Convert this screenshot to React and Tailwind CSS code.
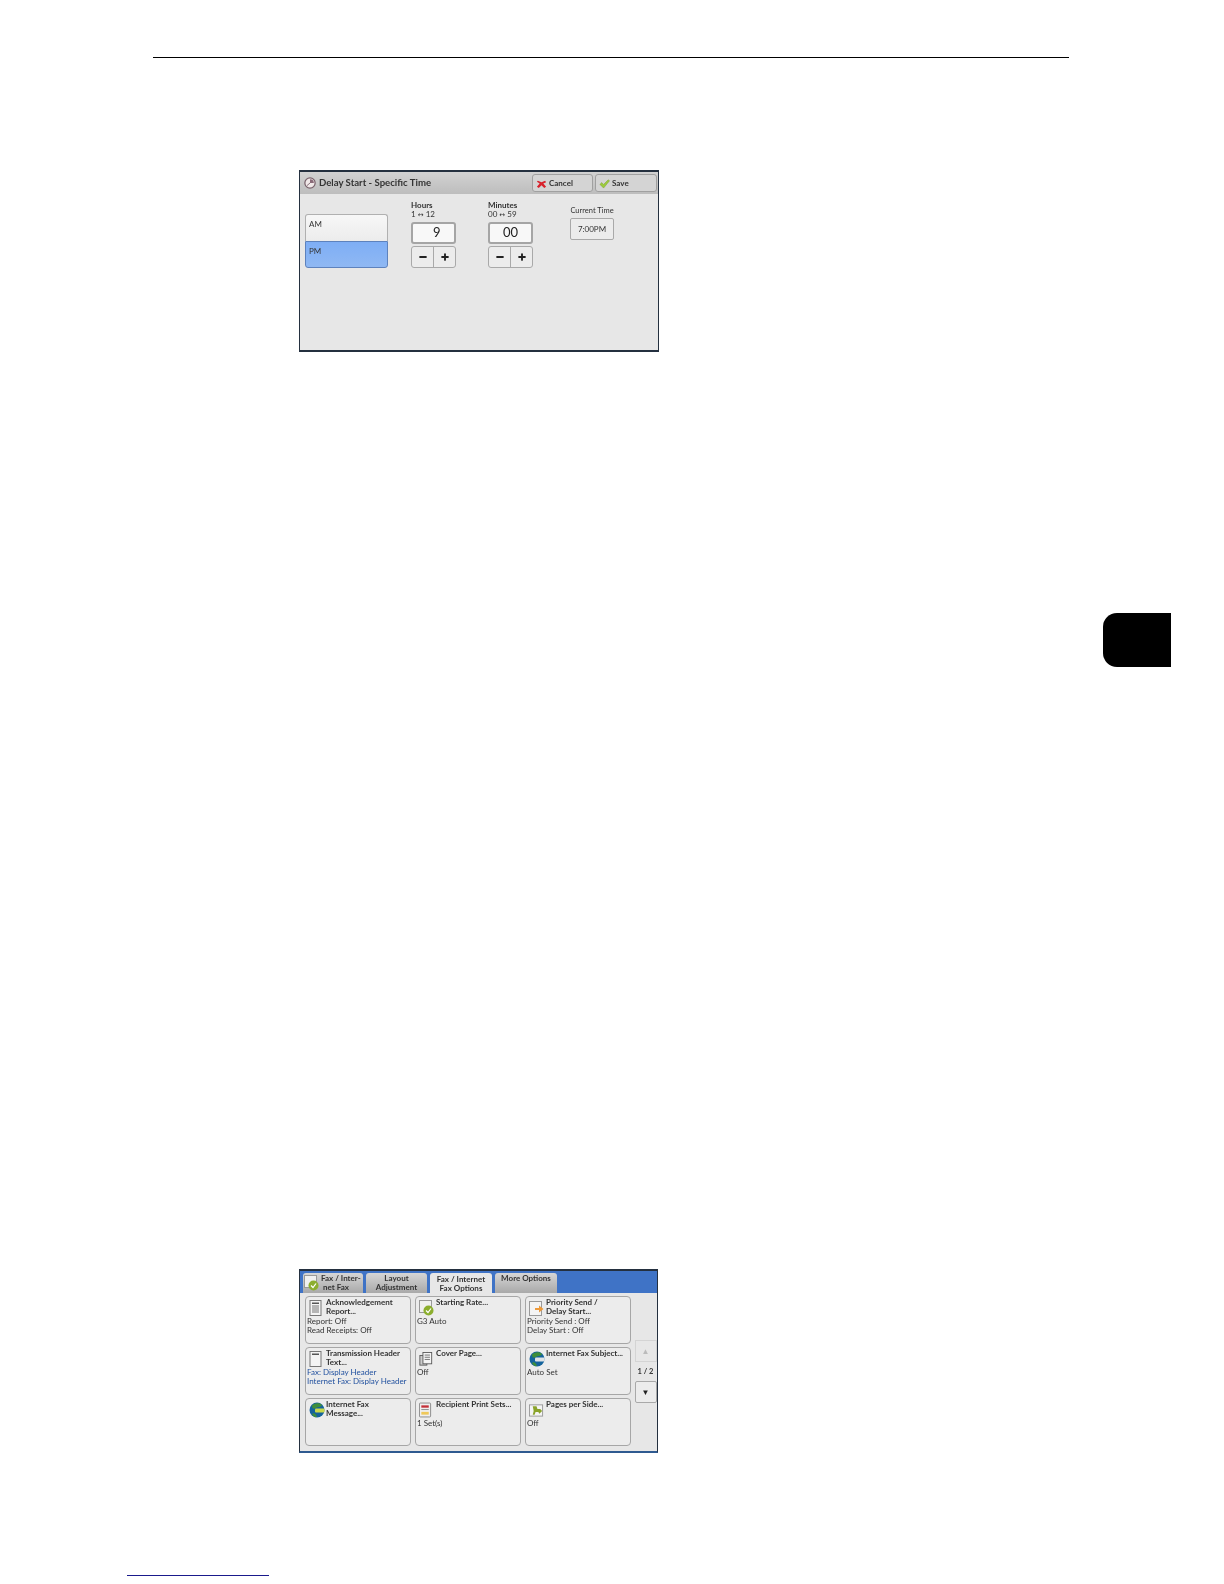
import { Minus, Plus } from 'lucide-react';

const UI_FONT = "font-['Lato',sans-serif]";

const CARDS = [
  { icon: 'report', title: ['Acknowledgement', 'Report...'], lines: ['Report: Off', 'Read Receipts: Off'] },
  { icon: 'rate', title: ['Starting Rate...'], lines: ['G3 Auto'] },
  { icon: 'priority', title: ['Priority Send /', 'Delay Start...'], lines: ['Priority Send : Off', 'Delay Start : Off'] },
  { icon: 'header', title: ['Transmission Header', 'Text...'], lines: ['Fax: Display Header', 'Internet Fax: Display Header'], blue: true },
  { icon: 'cover', title: ['Cover Page...'], lines: ['Off'] },
  { icon: 'globe', title: ['Internet Fax Subject...'], lines: ['Auto Set'] },
  { icon: 'globe2', title: ['Internet Fax', 'Message...'], lines: [] },
  { icon: 'sets', title: ['Recipient Print Sets...'], lines: ['1 Set(s)'] },
  { icon: 'pages', title: ['Pages per Side...'], lines: ['Off'] },
];

function CardIcon({ name }) {
  if (name === 'report' || name === 'header') {
    return (
      <svg viewBox="0 0 14 16" className="h-[16px] w-[14px]">
        <rect x="1" y="0.5" width="11" height="15" fill="#f4f4f4" stroke="#777" />
        <rect x="3" y="2.5" width="7" height="1.5" fill="#555" />
        {name === 'report' && <path d="M3 6h7M3 8h7M3 10h7M3 12h7" stroke="#777" />}
      </svg>
    );
  }
  if (name === 'rate') {
    return (
      <svg viewBox="0 0 16 16" className="h-[16px] w-[16px]">
        <rect x="0.5" y="0.5" width="12" height="12" fill="#f0f0f0" stroke="#999" />
        <circle cx="9.5" cy="10.5" r="5" fill="#8cae2e" />
        <path d="M7 10.5l2 2 3-4" stroke="#fff" strokeWidth="1.2" fill="none" />
      </svg>
    );
  }
  if (name === 'priority') {
    return (
      <svg viewBox="0 0 16 16" className="h-[16px] w-[16px]">
        <rect x="0.5" y="1.5" width="12" height="14" fill="#f4f4f4" stroke="#999" />
        <path d="M6 8h4V5.5L14.5 9 10 12.5V10H6z" fill="#ee9a3a" />
      </svg>
    );
  }
  if (name === 'cover') {
    return (
      <svg viewBox="0 0 16 16" className="h-[16px] w-[14px]">
        <rect x="1" y="4" width="8" height="11" fill="#ccc" stroke="#555" />
        <rect x="4.5" y="0.5" width="10" height="13" fill="#f4f4f4" stroke="#555" />
        <path d="M6.5 3.5h6M6.5 6h6M6.5 8.500h6" stroke="#666" />
      </svg>
    );
  }
  if (name === 'globe' || name === 'globe2') {
    return (
      <svg viewBox="0 0 16 16" className="h-[16px] w-[16px]">
        <circle cx="8" cy="8" r="7.500" fill="#14639c" />
        <path d="M3 3.500C6 .5 11 .5 13 3c-1 2.500-4 1.500-6 3S3 7 3 3.500z" fill="#3e8e3a" />
        <rect x="6" y="6.500" width="9.500" height="4" rx="1" fill={name === 'globe' ? '#dfe3e6' : '#c9d84a'} />
        <path d="M3 12c2-2 4 0 5 3-2 .5-4-.5-5-3z" fill="#3e8e3a" />
      </svg>
    );
  }
  if (name === 'sets') {
    return (
      <svg viewBox="0 0 14 16" className="h-[16px] w-[13px]">
        <rect x="0.5" y="0.5" width="12" height="15" rx="1" fill="#efefef" stroke="#888" />
        <rect x="2.500" y="3" width="8" height="2.500" fill="#c4313a" />
        <path d="M2.500 7.500h8" stroke="#888" />
        <rect x="2.500" y="10" width="8" height="3" fill="#efc85a" />
      </svg>
    );
  }
  return (
    <svg viewBox="0 0 16 16" className="h-[16px] w-[15px]">
      <rect x="0.5" y="2.500" width="14" height="12" fill="#f4f4f4" stroke="#999" />
      <path d="M4 4h4l1 3h3l2 2-3 3-1-2H7L6 13H4l1-4z" fill="#8aa32a" />
    </svg>
  );
}

function Stepper() {
  return (
    <div className="mt-[2px] flex h-[22px] w-[45px] rounded-[3px] border border-[#a9a9a9] bg-[#ececec]">
      <div className="flex flex-1 items-center justify-center border-r border-[#a9a9a9]">
        <Minus size={10} strokeWidth={4.500} color="#222" />
      </div>
      <div className="flex flex-1 items-center justify-center">
        <Plus size={10} strokeWidth={4.500} color="#222" />
      </div>
    </div>
  );
}

function TimeField({ label, range, value, valueClass }) {
  return (
    <div className="flex w-[45px] flex-col">
      <div className="whitespace-nowrap text-[8px] leading-[9px] font-bold text-[#333]">{label}</div>
      <div className="whitespace-nowrap text-[8px] leading-[9px] text-[#333]">
        {range[0]} <span className="font-['DejaVu_Sans',sans-serif] text-[7px]">↔</span> {range[1]}
      </div>
      <div className="mt-[2px] flex h-[22px] items-center rounded-[3px] border-2 border-[#a5a5a5] bg-[#f8f8f8] text-[13px] text-[#222]">
        <span className={valueClass}>{value}</span>
      </div>
      <Stepper />
    </div>
  );
}

function DelayPanel() {
  return (
    <div className={`ml-[299px] flex h-[182px] w-[360px] flex-col border border-t-2 border-b-2 border-[#24303f] bg-[#e7e7e7] blur-[0.3px] ${UI_FONT}`}>
      <div className="flex h-[22px] items-center bg-gradient-to-b from-[#d2d2d2] to-[#bdbdbd] pr-[1px] pl-[4px]">
        <svg viewBox="0 0 14 14" className="h-[12px] w-[12px]">
          <circle cx="7" cy="7" r="6" fill="#f0e8e8" stroke="#77606a" strokeWidth="1.4" />
          <path d="M7 7V2.500A4.500 4.500 0 0 1 11.500 7z" fill="#8a6a78" />
          <path d="M7 7L3.500 10" stroke="#77606a" />
        </svg>
        <span className="ml-[3px] text-[9.600px] font-bold text-[#333]">Delay Start - Specific Time</span>
        <div className="ml-auto flex h-[18px] w-[61px] items-center rounded-[3px] border border-[#a0a0a0] bg-[#d4d4d4] pl-[3px]">
          <svg viewBox="0 0 12 12" className="h-[11px] w-[11px]">
            <path d="M2 3l4 1.500L10 3l1 1.500L8 6l3 3.500-2 1.500-3-3-3 3-2-1.500L4 6 1 4z" fill="#d8222c" />
          </svg>
          <span className="ml-[2px] text-[8px] font-bold text-[#333]">Cancel</span>
        </div>
        <div className="ml-[2px] flex h-[18px] w-[62px] items-center rounded-[3px] border border-[#a0a0a0] bg-[#d4d4d4] pl-[3px]">
          <svg viewBox="0 0 12 12" className="h-[11px] w-[11px]">
            <path d="M1 7l2-2 2 2 5-5 1.500 1L5 11z" fill="#9ccb3c" stroke="#7a9a30" strokeWidth="0.5" />
          </svg>
          <span className="ml-[2px] text-[8px] font-bold text-[#333]">Save</span>
        </div>
      </div>
      <div className="flex flex-1 items-start pt-[7px] pl-[5px]">
        <div className="mt-[13px] flex w-[83px] flex-col rounded-[3px] text-[8px] text-[#333]">
          <div className="h-[27px] rounded-t-[3px] border border-b-0 border-[#b0b0b0] bg-gradient-to-b from-[#f7f7f7] to-[#ececec] pt-[3px] pl-[3px]">AM</div>
          <div className="h-[27px] rounded-b-[3px] border border-[#5d82bd] bg-gradient-to-b from-[#7eaef5] to-[#8fb8f3] pt-[3px] pl-[3px]">PM</div>
        </div>
        <div className="ml-[23px]">
          <TimeField label="Hours" range={['1', '12']} value="9" valueClass="ml-[20px]" />
        </div>
        <div className="ml-[32px]">
          <TimeField label="Minutes" range={['00', '59']} value="00" valueClass="mx-auto" />
        </div>
        <div className="ml-[37px] flex w-[44px] flex-col items-center pt-[5px]">
          <div className="whitespace-nowrap text-[7.500px] leading-[9px] text-[#333]">Current Time</div>
          <div className="mt-[3px] flex h-[22px] w-[44px] items-center justify-center rounded-[2px] border border-[#a9a9a9] bg-[#ececec] text-[8px] text-[#333]">7:00PM</div>
        </div>
      </div>
    </div>
  );
}

function Tab({ lines, active, icon, className }) {
  return (
    <div className={`flex flex-col justify-center rounded-t-[3px] text-center text-[8px] leading-[9.500px] font-bold whitespace-nowrap text-[#333] ${active ? 'h-[22px] bg-[#e7e7e7]' : 'h-[20px] bg-gradient-to-b from-[#d6d6d6] to-[#a9a9a9]'} ${className}`}>
      {icon ? (
        <div className="flex items-center">
          <CardIcon name="rate" />
          <div className="ml-[1px] text-left">
            <div>{lines[0]}</div>
            <div className="ml-[2px]">{lines[1]}</div>
          </div>
        </div>
      ) : (
        lines.map((l) => <div key={l}>{l}</div>)
      )}
    </div>
  );
}

function OptionsPanel() {
  return (
    <div className={`ml-[299px] flex h-[184px] w-[359px] flex-col border border-t-2 border-b-2 border-[#24303f] border-b-[#2f5a90] bg-[#e7e7e7] blur-[0.3px] ${UI_FONT}`}>
      <div className="flex h-[22px] items-start gap-[3px] bg-[#3f73c6] pt-[1px] pl-[3px]">
        <Tab lines={['Fax / Inter-', 'net Fax']} icon className="mt-[1px] w-[60px] pl-[1px]" />
        <Tab lines={['Layout', 'Adjustment']} className="mt-[1px] w-[61px]" />
        <Tab lines={['Fax / Internet', 'Fax Options']} active className="mt-[1px] w-[62px]" />
        <Tab lines={['More Options']} className="mt-[1px] w-[62px] justify-start pt-[1px]" />
      </div>
      <div className="flex flex-1 items-start pt-[3px] pl-[5px]">
        <div className="grid w-[326px] grid-cols-3 gap-x-[4px] gap-y-[3px]">
          {CARDS.map((card) => (
            <div key={card.icon} className="h-[48px] rounded-[4px] border border-[#a6a6a6] bg-[#ececec] px-[1px] pt-[1px] text-[8px] leading-[9.300px] text-[#333]">
              <div className="flex min-h-[18.600px]">
                <div className="ml-[2px] w-[17px] shrink-0 pt-[2px]">
                  <CardIcon name={card.icon} />
                </div>
                <div className="font-bold whitespace-nowrap">
                  {card.title.map((t) => <div key={t}>{t}</div>)}
                </div>
              </div>
              <div className={`whitespace-nowrap ${card.blue ? 'text-[#1f4f9e]' : ''}`}>
                {card.lines.map((t) => <div key={t}>{t}</div>)}
              </div>
            </div>
          ))}
        </div>
        <div className="ml-[3px] flex w-[23px] flex-col items-center pt-[44px]">
          <div className="flex h-[22px] w-[22px] items-center justify-center border border-[#d4d4d4] text-[8px] text-[#bbb]">▲</div>
          <div className="py-[5px] text-[7.500px] leading-[9px] font-bold text-[#333]">1 / 2</div>
          <div className="flex h-[22px] w-[22px] items-center justify-center rounded-[2px] border border-[#a9a9a9] bg-[#ececec] text-[8px] text-[#222]">▼</div>
        </div>
      </div>
    </div>
  );
}

export default function App() {
  return (
    <div className="flex h-[1584px] w-[1224px] overflow-hidden bg-white">
      <div className="flex w-[1103px] flex-col">
        <div className="mt-[57px] ml-[153px] h-[1px] w-[916px] bg-black" />
        <div className="mt-[112px]">
          <DelayPanel />
        </div>
        <div className="mt-[917px]">
          <OptionsPanel />
        </div>
        <div className="mt-[122px] ml-[127px] h-[1px] w-[142px] bg-[#1a1a8c]" />
      </div>
      <div className="mt-[613px] h-[54px] w-[68px] rounded-l-[14px] bg-black" />
    </div>
  );
}
